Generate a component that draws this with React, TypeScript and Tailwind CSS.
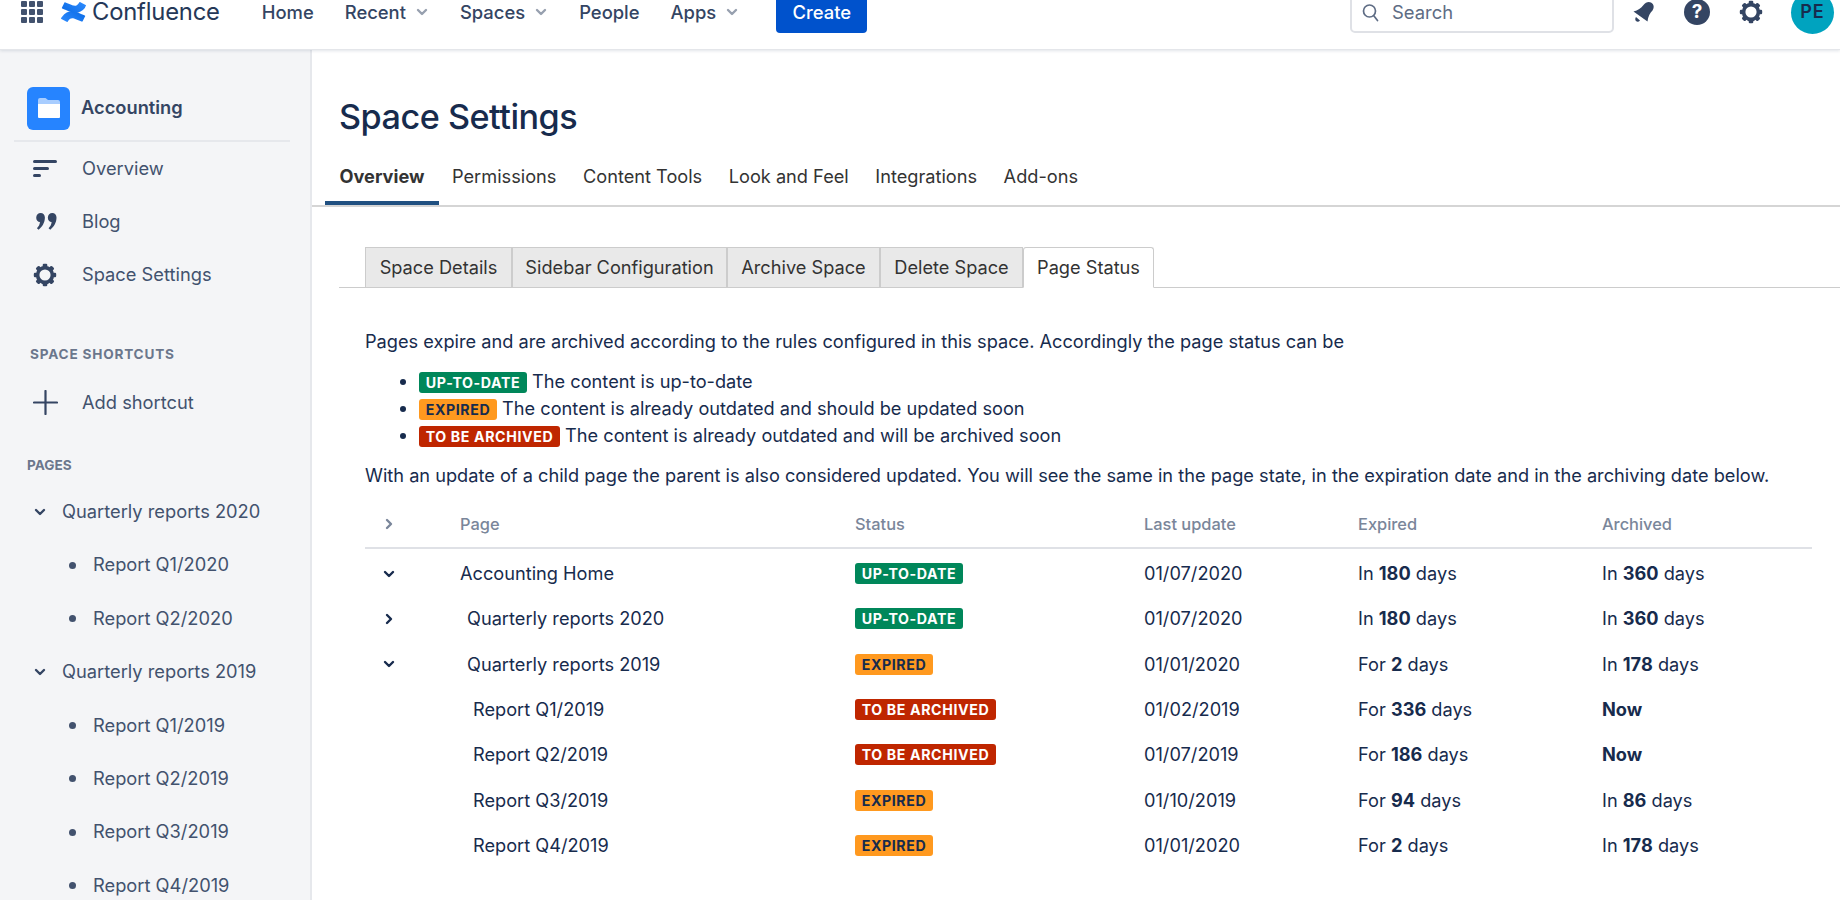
import type { ReactNode } from "react";

const font = "font-['Inter',sans-serif]";

function Chevron({ dir, className }: { dir: "down" | "right"; className?: string }) {
  return (
    <svg width="14" height="14" viewBox="0 0 14 14" className={className} fill="none">
      <path
        d={dir === "down" ? "M3 5l4 4 4-4" : "M5 3l4 4-4 4"}
        stroke="currentColor"
        strokeWidth="2.4"
        strokeLinecap="round"
        strokeLinejoin="round"
      />
    </svg>
  );
}

function ConfluenceLogo() {
  return (
    <svg width="25" height="22" viewBox="0 0 32 32" preserveAspectRatio="none">
      <defs>
        <linearGradient id="confA" x1="0" y1="1" x2="1" y2="0.4">
          <stop offset="0" stopColor="#2f8cff" />
          <stop offset="1" stopColor="#0f6fe8" />
        </linearGradient>
        <linearGradient id="confB" x1="1" y1="0" x2="0" y2="0.6">
          <stop offset="0" stopColor="#2f8cff" />
          <stop offset="1" stopColor="#0f6fe8" />
        </linearGradient>
      </defs>
      <path
        fill="url(#confA)"
        d="M1.16 23.16c-.33.54-.7 1.17-1.02 1.67-.28.48-.13 1.1.34 1.39l6.7 4.12c.47.3 1.1.15 1.4-.33v-.01c.27-.45.61-1.03.99-1.66 2.66-4.39 5.33-3.85 10.15-1.55l6.64 3.16c.5.24 1.1.02 1.34-.49l3.19-7.2c.23-.5.01-1.09-.48-1.32-1.4-.66-4.19-1.97-6.7-3.18C15.17 13.3 7.58 13.58 1.16 23.16z"
      />
      <path
        fill="url(#confB)"
        d="M30.84 8.84c.33-.54.7-1.17 1.02-1.67.28-.48.13-1.1-.34-1.39l-6.7-4.12c-.47-.3-1.1-.15-1.4.33v.01c-.27.45-.61 1.03-.99 1.66-2.66 4.39-5.33 3.85-10.15 1.55L5.64 2.05c-.5-.24-1.1-.02-1.34.49l-3.19 7.2c-.23.5-.01 1.09.48 1.32 1.4.66 4.19 1.97 6.7 3.18 8.88 4.46 16.47 4.18 22.55-4.4z"
      />
    </svg>
  );
}

function Gear({ size }: { size: number }) {
  const teeth = [0, 45, 90, 135, 180, 225, 270, 315];
  return (
    <svg width={size} height={size} viewBox="0 0 24 24" fill="none">
      {teeth.map((a) => (
        <rect key={a} x="9.7" y="0.8" width="4.6" height="5" rx="1.2" fill="currentColor" transform={`rotate(${a} 12 12)`} />
      ))}
      <circle cx="12" cy="12" r="7.4" stroke="currentColor" strokeWidth="3.6" />
    </svg>
  );
}

function NavItem({ label, menu }: { label: string; menu?: boolean }) {
  return (
    <div className="flex items-center gap-[9px]">
      <span>{label}</span>
      {menu && <Chevron dir="down" className="text-[#97a0af]" />}
    </div>
  );
}

function TopBar() {
  return (
    <header className="relative z-10 flex h-[50px] shrink-0 items-center border-b border-[#e4e6ea] bg-white pb-[25px] text-[18.4px] leading-[24px] text-[#344563] shadow-[0_1px_3px_rgba(9,30,66,0.12)]">
      <div className="ml-[21px] grid w-[22px] grid-cols-3 gap-[2px]">
        {Array.from({ length: 9 }).map((_, i) => (
          <span key={i} className="h-[6px] w-[6px] rounded-[1px] bg-[#42526e]" />
        ))}
      </div>
      <div className="ml-[18px] flex items-center">
        <ConfluenceLogo />
      </div>
      <span className="ml-[6px] text-[23.8px] tracking-[-0.2px] text-[#253858]">Confluence</span>
      <nav className="ml-[42px] flex items-center gap-[31px] font-medium">
        <NavItem label="Home" />
        <NavItem label="Recent" menu />
        <NavItem label="Spaces" menu />
        <NavItem label="People" />
        <NavItem label="Apps" menu />
      </nav>
      <button className="ml-[37px] flex h-[42px] w-[91px] items-center justify-center rounded-[4px] bg-[#0052cc] font-medium text-white">
        Create
      </button>
      <div className="ml-auto flex h-[42px] w-[264px] items-center gap-[13px] rounded-[5px] border-2 border-[#dfe1e6] bg-white pl-[10px] text-[#5e6c84]">
        <svg width="17" height="19" viewBox="0 0 17 19" fill="none">
          <circle cx="7.5" cy="8" r="6" stroke="currentColor" strokeWidth="1.7" />
          <path d="M12 13l3.5 4.5" stroke="currentColor" strokeWidth="1.7" strokeLinecap="round" />
        </svg>
        <span>Search</span>
      </div>
      <div className="ml-[18px] flex items-center text-[#344563]">
        <svg width="24" height="24" viewBox="0 0 24 24" className="w-[24px]">
          <path
            fill="currentColor"
            d="M1.500 11.500C6 10.500 9 8 11.500 5c2-2.500 5-4 7.500-2.500 3 1.500 3.500 5 1.500 8-2.500 2.500-4.500 6-5 11zM4 17l4 3.500c-1.200 1.500-3 1.500-4 .5s-1-2.500 0-4z"
          />
        </svg>
      </div>
      <div className="ml-[28px] flex h-[26px] w-[26px] items-center justify-center rounded-full bg-[#344563] text-[19px] font-bold text-white">
        ?
      </div>
      <div className="ml-[29px] text-[#344563]">
        <Gear size={24} />
      </div>
      <div className="ml-[28px] mr-[6px] flex h-[43px] w-[43px] items-center justify-center rounded-full bg-[#00a3bf] text-[18px] font-semibold tracking-[1px] text-[#172b4d]">
        PE
      </div>
    </header>
  );
}

function SideLink({ icon, label, className }: { icon: ReactNode; label: string; className?: string }) {
  return (
    <div className={`flex h-[53px] shrink-0 items-center ${className ?? ""}`}>
      <div className="flex w-[82px] pl-[33px]">{icon}</div>
      <span>{label}</span>
    </div>
  );
}

function TreeParent({ label }: { label: string }) {
  return (
    <div className="flex h-[53.4px] items-center pl-[33px]">
      <Chevron dir="down" className="text-[#344563]" />
      <span className="ml-[15px]">{label}</span>
    </div>
  );
}

function TreeChild({ label }: { label: string }) {
  return (
    <div className="flex h-[53.4px] items-center pl-[69px]">
      <span className="h-[7px] w-[7px] rounded-full bg-[#42526e]" />
      <span className="ml-[17px]">{label}</span>
    </div>
  );
}

function Sidebar() {
  return (
    <aside className="flex w-[312px] shrink-0 flex-col overflow-hidden border-r-2 border-[#e6e8ec] bg-[#f4f5f7] text-[18.3px] text-[#42526e]">
      <div className="mx-[14px] flex h-[92px] w-[276px] shrink-0 items-center border-b-2 border-[#e6e8ec] pl-[13px] pt-[26px]">
        <div className="flex h-[43px] w-[43px] items-center justify-center rounded-[6px] bg-[#2684ff]">
          <svg width="22" height="20" viewBox="0 0 22 20">
            <path fill="#a8cdff" d="M0 2a2 2 0 0 1 2-2h5.500l2.500 2h10a2 2 0 0 1 2 2v3H0z" />
            <path fill="#fff" d="M0 6h22v13a1 1 0 0 1-1 1H1a1 1 0 0 1-1-1z" />
          </svg>
        </div>
        <span className="ml-[11px] font-semibold text-[#344563]">Accounting</span>
      </div>
      <SideLink
        label="Overview"
        icon={
          <div className="flex w-[25px] flex-col gap-[4px]">
            <span className="h-[3px] w-[24px] rounded-full bg-[#344563]" />
            <span className="h-[3px] w-[16px] rounded-full bg-[#344563]" />
            <span className="h-[3px] w-[8px] rounded-full bg-[#344563]" />
          </div>
        }
      />
      <SideLink
        label="Blog"
        icon={
          <svg width="21" height="17" viewBox="0 0 23 19" className="ml-[3px]">
            <path
              fill="#344563"
              d="M5 0c2.700 0 4.700 2 4.700 5 0 5.700-3 10.500-7 13.700L.8 17c2-1.900 3.200-4 3.400-6.900C1.800 9.900 0 8 0 5.300 0 2.300 2.200 0 5 0zM18 0c2.700 0 4.700 2 4.700 5 0 5.700-3 10.500-7 13.700L13.800 17c2-1.900 3.200-4 3.400-6.900-2.400-.2-4.200-2.100-4.200-4.800C13 2.300 15.200 0 18 0z"
            />
          </svg>
        }
      />
      <SideLink label="Space Settings" icon={<div className="text-[#344563]"><Gear size={24} /></div>} />
      <div className="ml-[30px] mt-[45px] shrink-0 text-[13.6px] leading-[16px] font-bold tracking-[0.8px] text-[#6b778c]">SPACE SHORTCUTS</div>
      <SideLink
        label="Add shortcut"
        className="mt-[14px]"
        icon={
          <svg width="25" height="25" viewBox="0 0 25 25">
            <path d="M12.5 1v23M1 12.500h23" stroke="#344563" strokeWidth="2.2" strokeLinecap="round" />
          </svg>
        }
      />
      <div className="ml-[27px] mt-[28px] shrink-0 text-[13.6px] leading-[16px] font-bold text-[#6b778c]">PAGES</div>
      <div className="mt-[12px] shrink-0">
        <TreeParent label="Quarterly reports 2020" />
        <TreeChild label="Report Q1/2020" />
        <TreeChild label="Report Q2/2020" />
        <TreeParent label="Quarterly reports 2019" />
        <TreeChild label="Report Q1/2019" />
        <TreeChild label="Report Q2/2019" />
        <TreeChild label="Report Q3/2019" />
        <TreeChild label="Report Q4/2019" />
      </div>
    </aside>
  );
}

type Status = "ok" | "expired" | "archive";

function Badge({ status }: { status: Status }) {
  if (status === "ok") {
    return (
      <span className="inline-flex h-[21px] w-[108px] items-center justify-center rounded-[3px] bg-[#00875a] text-[14.2px] font-bold tracking-[0.6px] text-white">
        UP-TO-DATE
      </span>
    );
  }
  if (status === "expired") {
    return (
      <span className="inline-flex h-[21px] w-[78px] items-center justify-center rounded-[3px] bg-[#ff991f] text-[14.2px] font-bold tracking-[0.6px] text-[#172b4d]">
        EXPIRED
      </span>
    );
  }
  return (
    <span className="inline-flex h-[21px] w-[141px] items-center justify-center rounded-[3px] bg-[#bf2600] text-[14.2px] font-bold tracking-[0.6px] text-white">
      TO BE ARCHIVED
    </span>
  );
}

const tableCols = "grid grid-cols-[95px_395px_289px_214px_244px_1fr] items-center";

type Row = {
  toggle?: "down" | "right";
  name: string;
  indent: string;
  status: Status;
  updated: string;
  expired: [string, string];
  archived: [string, string] | null;
};

const rows: Row[] = [
  { toggle: "down", name: "Accounting Home", indent: "pl-0", status: "ok", updated: "01/07/2020", expired: ["In", "180"], archived: ["In", "360"] },
  { toggle: "right", name: "Quarterly reports 2020", indent: "pl-[7px]", status: "ok", updated: "01/07/2020", expired: ["In", "180"], archived: ["In", "360"] },
  { toggle: "down", name: "Quarterly reports 2019", indent: "pl-[7px]", status: "expired", updated: "01/01/2020", expired: ["For", "2"], archived: ["In", "178"] },
  { name: "Report Q1/2019", indent: "pl-[13px]", status: "archive", updated: "01/02/2019", expired: ["For", "336"], archived: null },
  { name: "Report Q2/2019", indent: "pl-[13px]", status: "archive", updated: "01/07/2019", expired: ["For", "186"], archived: null },
  { name: "Report Q3/2019", indent: "pl-[13px]", status: "expired", updated: "01/10/2019", expired: ["For", "94"], archived: ["In", "86"] },
  { name: "Report Q4/2019", indent: "pl-[13px]", status: "expired", updated: "01/01/2020", expired: ["For", "2"], archived: ["In", "178"] },
];

function Days({ value }: { value: [string, string] }) {
  return (
    <span>
      {value[0]} <b className="font-bold">{value[1]}</b> days
    </span>
  );
}

function PageTable() {
  return (
    <div className="mr-[28px] mt-[14px]">
      <div className={`${tableCols} h-[46px] border-b-2 border-[#dfe1e6] pb-[2px] text-[16.4px] font-medium text-[#7a869a]`}>
        <div className="pl-[17px]">
          <Chevron dir="right" className="text-[#7a869a]" />
        </div>
        <div>Page</div>
        <div>Status</div>
        <div>Last update</div>
        <div>Expired</div>
        <div>Archived</div>
      </div>
      <div className="mt-[2px]">
        {rows.map((r) => (
          <div key={r.name} className={`${tableCols} h-[45.33px] text-[#172b4d]`}>
            <div className="pl-[17px]">
              {r.toggle && <Chevron dir={r.toggle} className="text-[#172b4d]" />}
            </div>
            <div className={r.indent}>{r.name}</div>
            <div className="flex items-center">
              <Badge status={r.status} />
            </div>
            <div>{r.updated}</div>
            <div>
              <Days value={r.expired} />
            </div>
            <div>{r.archived ? <Days value={r.archived} /> : <b className="font-bold">Now</b>}</div>
          </div>
        ))}
      </div>
    </div>
  );
}

function SubTab({ label, width, active }: { label: string; width: string; active?: boolean }) {
  return (
    <div
      className={`flex h-[41px] items-center justify-center border border-[#cccccc] text-[#333333] ${width} ${
        active ? "rounded-t-[3px] border-b-white bg-white" : "bg-[#e9e9e9]"
      }`}
    >
      {label}
    </div>
  );
}

function Main() {
  const tabs = ["Permissions", "Content Tools", "Look and Feel", "Integrations", "Add-ons"];
  return (
    <main className="flex min-w-0 flex-1 flex-col overflow-hidden bg-white text-[18.2px]">
      <h1 className="ml-[27px] mt-[43px] text-[34.2px] leading-[48px] font-medium tracking-[-0.5px] text-[#172b4d]">
        Space Settings
      </h1>
      <div className="mt-[20px] flex h-[46px] border-b-2 border-[#d5d5d5] pl-[13px] text-[#333333]">
        <div className="flex w-[114px] items-center justify-center border-b-4 border-[#205081] pb-[8px] font-bold">
          Overview
        </div>
        <div className="flex items-center gap-[26.5px] pb-[12px] pl-[13px]">
          {tabs.map((t) => (
            <span key={t}>{t}</span>
          ))}
        </div>
      </div>
      <div className="ml-[27px] mt-[40px] flex h-[41px] items-start border-b border-[#cccccc] pl-[26px]">
        <SubTab label="Space Details" width="w-[147px]" />
        <SubTab label="Sidebar Configuration" width="w-[215px]" />
        <SubTab label="Archive Space" width="w-[153px]" />
        <SubTab label="Delete Space" width="w-[143px]" />
        <SubTab label="Page Status" width="w-[131px]" active />
      </div>
      <div className="pl-[53px] pt-[40px] text-[#172b4d]">
        <p className="leading-[27px]">
          Pages expire and are archived according to the rules configured in this space. Accordingly the page status can be
        </p>
        <ul className="mt-[13px] list-disc pl-[54px] leading-[27px] marker:text-[#172b4d]">
          <li>
            <Badge status="ok" /> The content is up-to-date
          </li>
          <li>
            <Badge status="expired" /> The content is already outdated and should be updated soon
          </li>
          <li>
            <Badge status="archive" /> The content is already outdated and will be archived soon
          </li>
        </ul>
        <p className="mt-[13px] leading-[27px]">
          With an update of a child page the parent is also considered updated. You will see the same in the page state, in the expiration date and in the archiving date below.
        </p>
        <PageTable />
      </div>
    </main>
  );
}

export default function App() {
  return (
    <div className={`flex h-screen w-full flex-col overflow-hidden bg-white ${font}`}>
      <TopBar />
      <div className="flex min-h-0 flex-1">
        <Sidebar />
        <Main />
      </div>
    </div>
  );
}
